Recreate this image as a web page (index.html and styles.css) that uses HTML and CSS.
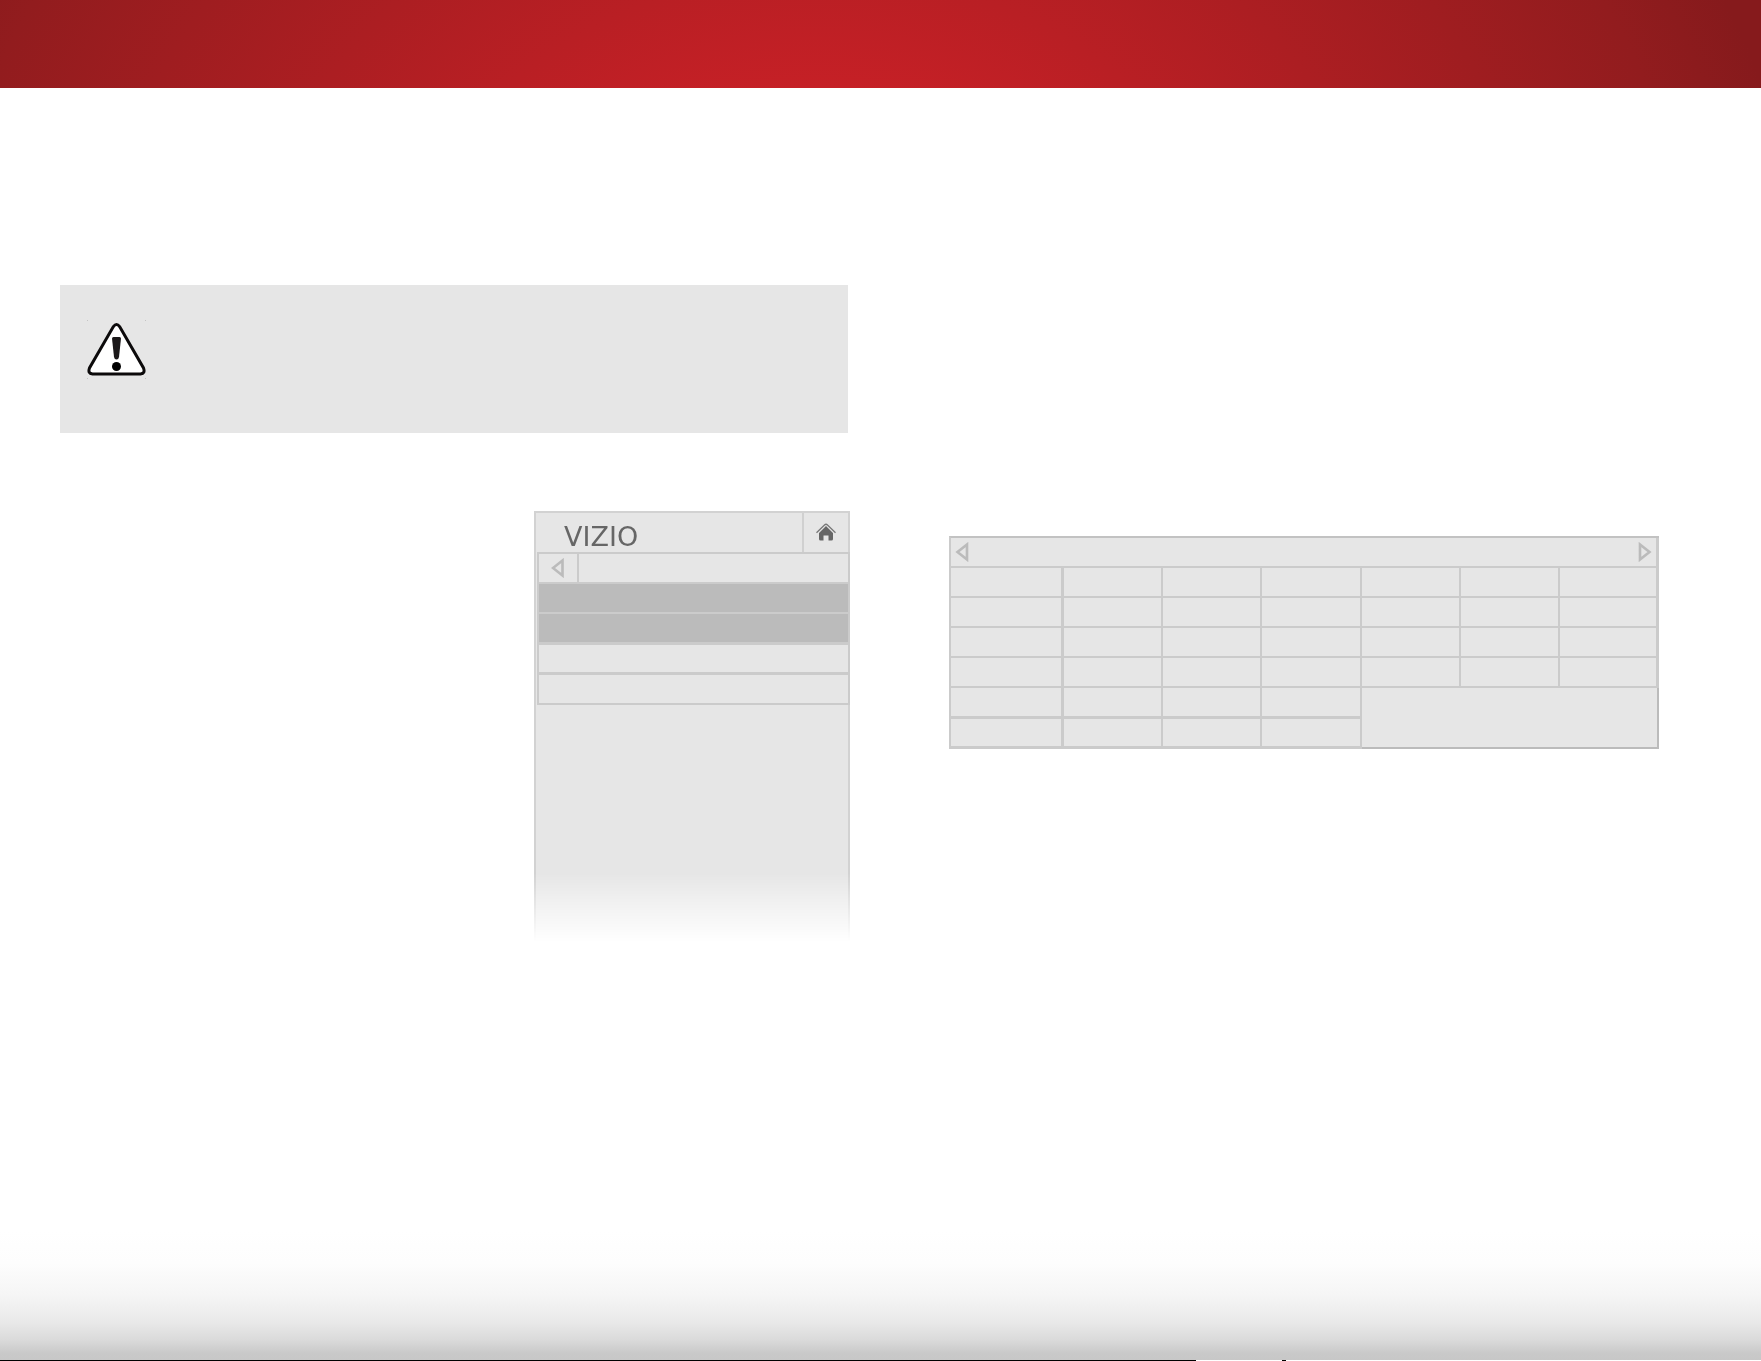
FILE: index.html
```html
<!DOCTYPE html>
<html lang="en">
  <head>
    <meta charset="utf-8" />
    <title>VIZIO</title>
    <link rel="stylesheet" href="styles.css">
  </head>
  <body>
    <header class="banner"></header>

    <main class="content">
      <section class="left">
        <div class="warning">
          <svg class="warning-icon" width="60" height="60" viewBox="0 0 60 60">
            <path d="M26.4 6.6 Q29.5 2.5 32.6 6.6 L56.5 48 Q58.5 53.5 53.5 54 H5.5 Q0.5 53.5 2.5 48 Z" fill="#fff" stroke="#0c0a0b" stroke-width="3" />
            <path d="M25 18.5 Q25 17 26.5 17 H32.5 Q34 17 34 18.5 L32 37 Q31.5 39.5 29.5 39.5 Q27.5 39.5 27 37 Z" fill="#1b1819" />
            <circle cx="29.5" cy="46.5" r="4.5" />
            <path d="M0 0h1v1h-1z M58 0h1v1h-1z M0 58h1v1h-1z M58 58h1v1h-1z" fill="#c4c4c4" />
          </svg>
        </div>

        <div class="menu">
          <div class="menu-top">
            <span class="logo">VIZIO</span>
            <button class="home" aria-label="Home">
              <svg width="20" height="19" viewBox="0 0 20 19">
                <path d="M0.5 9.8 L8.5 2 Q10 0.6 11.5 2 L19.5 9.8" fill="none" stroke="#777" stroke-width="1.3" />
                <path d="M10 3 L17 10 V16 Q17 17.5 15.5 17.5 H12.5 V12.500 H7.500 V17.5 H4.5 Q3 17.5 3 16 V10 Z" fill="#666" />
              </svg>
            </button>
          </div>
          <div class="menu-list">
            <div class="menu-row">
              <button class="back" aria-label="Back">
                <svg width="14" height="20" viewBox="0 0 14 20">
                  <path d="M11.5 2.5 V17.5 L2 10 Z" />
                </svg>
              </button>
            </div>
            <div class="menu-row dark"></div>
            <div class="menu-row dark last"></div>
            <div class="menu-row short"></div>
            <div class="menu-row"></div>
          </div>
        </div>
      </section>

      <section class="right">
        <table class="keys">
          <colgroup>
            <col class="first">
            <col span="6">
          </colgroup>
          <thead>
            <tr>
              <th colspan="7">
                <div class="nav">
                  <button aria-label="Previous">
                    <svg width="14" height="20" viewBox="0 0 14 20">
                      <path d="M12 2.5 V17.5 L2.5 10 Z" />
                    </svg>
                  </button>
                  <button aria-label="Next">
                    <svg width="14" height="20" viewBox="0 0 14 20">
                      <path d="M2 2.5 V17.5 L11.5 10 Z" />
                    </svg>
                  </button>
                </div>
              </th>
            </tr>
          </thead>
          <tbody>
            <tr><td></td><td></td><td></td><td></td><td></td><td></td><td></td></tr>
            <tr><td></td><td></td><td></td><td></td><td></td><td></td><td></td></tr>
            <tr><td></td><td></td><td></td><td></td><td></td><td></td><td></td></tr>
            <tr><td></td><td></td><td></td><td></td><td></td><td></td><td></td></tr>
            <tr class="thick"><td></td><td></td><td></td><td></td><td class="blank" colspan="3" rowspan="2"></td></tr>
            <tr class="end"><td></td><td></td><td></td><td></td></tr>
          </tbody>
        </table>
      </section>
    </main>

    <footer class="shade"></footer>
  </body>
</html>
```

FILE: styles.css
```css
* {
  box-sizing: border-box;
}

body {
  margin: 0;
  min-height: 100vh;
  display: flex;
  flex-direction: column;
  background: #fff;
  font-family: "DejaVu Sans", sans-serif;
}

button {
  display: flex;
  align-items: center;
  justify-content: center;
  padding: 0;
  border: 0;
  background: none;
  cursor: pointer;
}

.banner {
  height: 88px;
  background: radial-gradient(1400px 1100px at 46.5% 293px, #c62026 18%, #921c1e 62%, #861a1c 70%);
}

.content {
  flex: 1;
  display: grid;
  grid-template-columns: 790fr 710fr;
  column-gap: 99px;
  padding: 197px 102px 0 60px;
}

.warning {
  height: 148px;
  margin-right: 2px;
  padding: 35px 27px;
  background: #e6e6e6;
}

.warning-icon {
  display: block;
}

/* menu panel, fades out at the bottom */
.menu {
  width: 40%;
  height: 431px;
  margin: 78px 0 0 auto;
  padding-left: 1px;
  border: 2px solid #d2d2d2;
  border-bottom: 0;
  background: #e6e6e6;
  -webkit-mask-image: linear-gradient(#000 84%, transparent);
  mask-image: linear-gradient(#000 84%, transparent);
}

.menu-top {
  display: flex;
  justify-content: space-between;
  height: 39px;
}

.logo {
  padding-left: 27px;
  font-size: 27px;
  line-height: 48px;
  color: #666;
}

.home {
  width: 46px;
  border-left: 2px solid #d0d0d0;
}

.menu-list {
  margin-right: -2px;
  border: 2px solid #cbcbcb;
}

.menu-row {
  height: 30px;
  border-bottom: 2px solid #cbcbcb;
}

.menu-row:last-child {
  height: 28px;
  border-bottom: 0;
}

.dark {
  background: #bbb;
}

.last {
  height: 31px;
  border-bottom-width: 3px;
}

.short {
  border-bottom-width: 3px;
}

.back {
  width: 40px;
  height: 28px;
  border-right: 2px solid #cbcbcb;
}

.back path,
.nav path {
  fill: none;
  stroke: #bbb;
  stroke-width: 2.6;
}

.keys {
  width: 100%;
  margin-top: 251px;
  table-layout: fixed;
  border-collapse: separate;
  border-spacing: 0;
  border-top: 2px solid #c2c2c2;
  border-left: 2px solid #cbcbcb;
  background: #e6e6e6;
}

.first {
  width: 16%;
}

.keys th,
.keys td {
  height: 30px;
  padding: 0;
  border-right: 2px solid #cbcbcb;
  border-bottom: 2px solid #cbcbcb;
}

.keys th,
.keys td:first-child,
.keys td:nth-child(7) {
  border-right-width: 3px;
}

.nav {
  display: flex;
  justify-content: space-between;
  padding: 0 4px;
}

.keys .thick td {
  height: 31px;
  border-bottom-width: 3px;
}

.keys .end td {
  border-bottom-width: 3px;
}

.keys .thick .blank {
  border-right: 2px solid #bbb;
  border-bottom: 2px solid #bbb;
}

.shade {
  height: 130px;
  background:
    linear-gradient(to right, #000 67.9%, #fff 67.9%, #fff 72.8%, #000 72.8%, #000 73%, #fff 73%) bottom / 100% 1px no-repeat,
    linear-gradient(#fff, #fdfdfd 25%, #f5f5f5 50%, #e9e9e9 70%, #dadada 84%, #c9c9c9 94%, #c7c7c7);
}
```
